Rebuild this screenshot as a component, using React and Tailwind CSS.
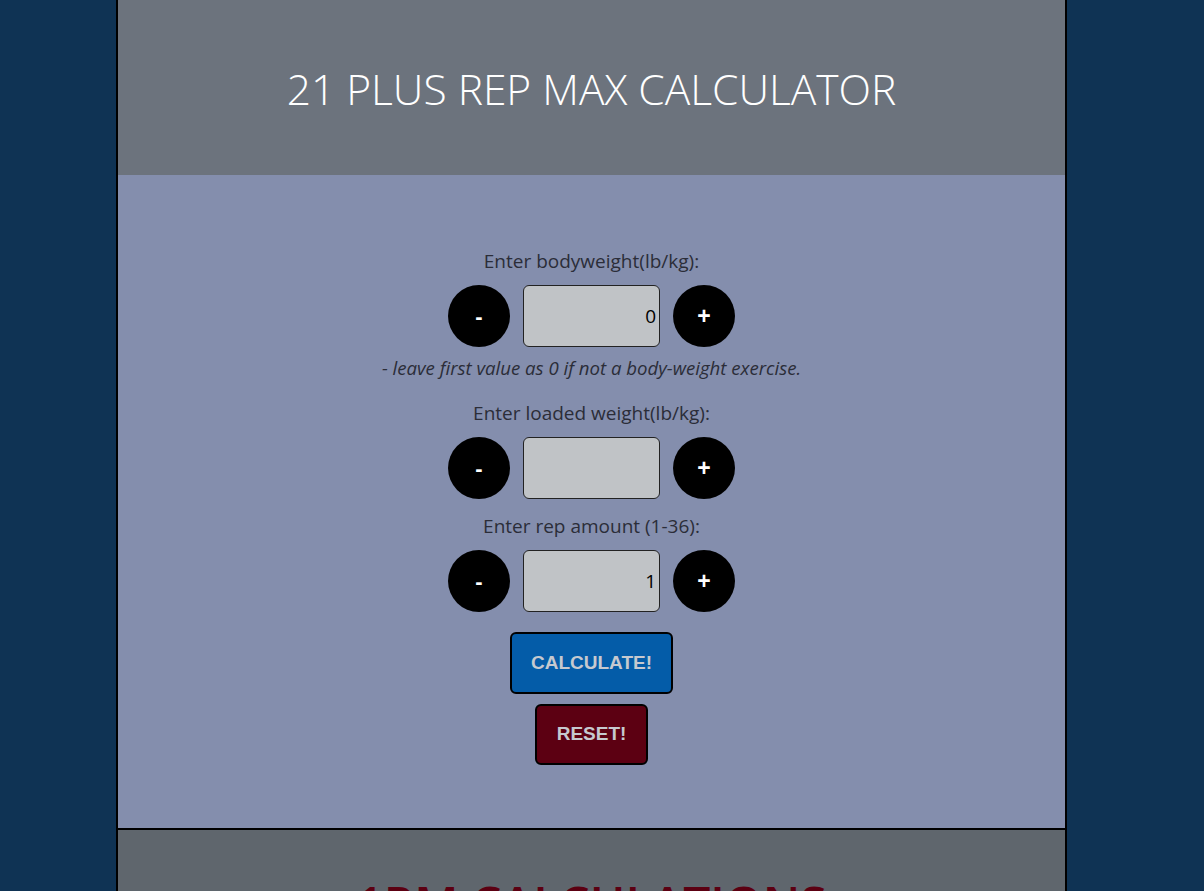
import React from "react";

function Stepper({ value }) {
  return (
    <div className="flex items-center justify-center gap-[13px]">
      <button className="w-[62px] h-[62px] rounded-full bg-black text-white font-bold text-[22px] flex items-center justify-center" style={{ fontFamily: "'Liberation Sans', Arial, sans-serif" }}>-</button>
      <input
        readOnly
        value={value}
        className="w-[137px] h-[62px] bg-[#c0c3c6] border border-[#222] rounded-[6px] text-right pr-[3px] text-[19px] text-black outline-none"
        style={{ fontFamily: "'Open Sans', sans-serif" }}
      />
      <button className="w-[62px] h-[62px] rounded-full bg-black text-white font-bold text-[23px] flex items-center justify-center" style={{ fontFamily: "'Liberation Sans', Arial, sans-serif" }}>+</button>
    </div>
  );
}

export default function App() {
  return (
    <div className="min-h-[1400px] bg-[#0f3354]" style={{ fontFamily: "'Open Sans', sans-serif" }}>
      <div className="ml-[116px] w-[951px] border-x-2 border-black">
        <header className="h-[175px] bg-[#6c737d] flex items-center justify-center">
          <h1 className="text-white font-light text-[42.5px] leading-none pt-[4px]">21 PLUS REP MAX CALCULATOR</h1>
        </header>
        <section className="bg-[#848ead] pt-[74px] pb-[63px] flex flex-col items-center text-[#2b2d38]">
          <div className="text-[19px] leading-[24px]">Enter bodyweight(lb/kg):</div>
          <div className="mt-[12px]"><Stepper value="0" /></div>
          <div className="mt-[9px] text-[18.6px] leading-[24px] italic">- leave first value as 0 if not a body-weight exercise.</div>
          <div className="mt-[21px] text-[19px] leading-[24px]">Enter loaded weight(lb/kg):</div>
          <div className="mt-[12px]"><Stepper value="" /></div>
          <div className="mt-[15px] text-[19px] leading-[24px]">Enter rep amount (1-36):</div>
          <div className="mt-[12px]"><Stepper value="1" /></div>
          <button className="mt-[20px] w-[163px] h-[62px] bg-[#045ca8] border-2 border-black rounded-[6px] text-[#c6c9cf] font-bold text-[19px]" style={{ fontFamily: "'Liberation Sans', Arial, sans-serif" }}>CALCULATE!</button>
          <button className="mt-[10px] w-[113px] h-[61px] bg-[#5c0012] border-2 border-black rounded-[6px] text-[#c6c9cf] font-bold text-[19px]" style={{ fontFamily: "'Liberation Sans', Arial, sans-serif" }}>RESET!</button>
        </section>
        <section className="border-t-2 border-black bg-[#5f666d] pt-[50px] pb-[40px] flex justify-center">
          <h2 className="text-[#5c0012] font-semibold text-[48px] leading-none" style={{ fontFamily: "'Open Sans', sans-serif" }}>1RM CALCULATIONS</h2>
        </section>
      </div>
    </div>
  );
}
